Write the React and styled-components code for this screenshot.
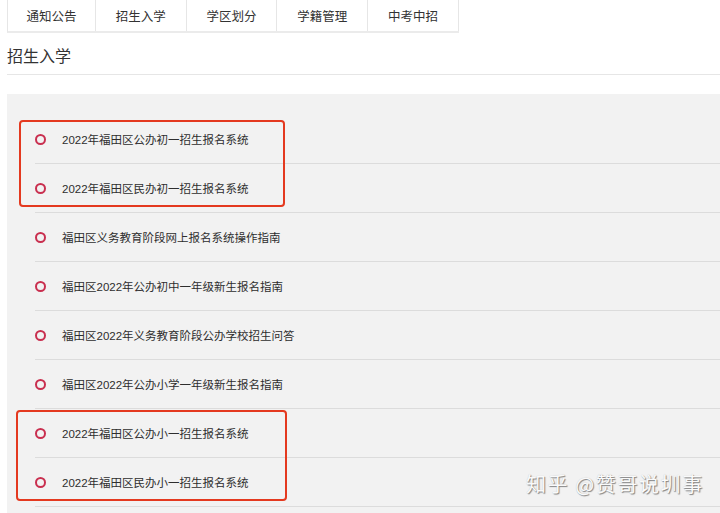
import React from "react";
import styled, { createGlobalStyle } from "styled-components";

const Global = createGlobalStyle`
  html, body { margin: 0; padding: 0; background: #fff; }
  body {
    font-family: "Liberation Sans", "Noto Sans CJK SC", sans-serif;
    color: #333;
    overflow: hidden;
  }
`;

const Page = styled.div`
  position: relative;
  width: 720px;
  height: 513px;
  padding-left: 7px;
  box-sizing: border-box;
  overflow: hidden;
`;

const Tabs = styled.nav`
  display: flex;
  height: 33px;
  width: 452px;
  border-bottom: 2px solid #ebebeb;
  border-left: 1px solid #e6e6e6;
  box-sizing: border-box;
`;

const Tab = styled.div`
  width: ${(p) => p.$w}px;
  display: flex;
  align-items: center;
  justify-content: center;
  font-size: 12.5px;
  color: #333;
  border-right: 1px solid #e6e6e6;
  box-sizing: border-box;
  padding-bottom: 1px;
`;

const Heading = styled.h2`
  margin: 0;
  height: 42px;
  display: flex;
  align-items: center;
  font-size: 16px;
  font-weight: normal;
  color: #333;
  border-bottom: 1px solid #e6e6e6;
  padding-top: 2px;
  box-sizing: border-box;
`;

const Panel = styled.div`
  margin-top: 19px;
  background: #f2f2f2;
  padding: 21px 0 0 28px;
  min-height: 420px;
`;

const Group = styled.div`
  position: relative;
  &::after {
    content: "";
    position: absolute;
    left: ${(p) => p.$l}px;
    top: ${(p) => p.$t}px;
    width: ${(p) => p.$w}px;
    height: ${(p) => p.$h}px;
    border: 2px solid #e4391f;
    border-radius: 4px;
    box-sizing: border-box;
    pointer-events: none;
  }
`;

const Row = styled.div`
  height: 49px;
  display: flex;
  align-items: center;
  border-bottom: 1px solid #dcdcdc;
  box-sizing: border-box;
  font-size: 11.5px;
  color: #2e2e2e;
`;

const Dot = styled.span`
  width: 11px;
  height: 11px;
  border: 2px solid #c92f4f;
  border-radius: 50%;
  box-sizing: border-box;
  margin-right: 16px;
  flex: none;
`;

const Watermark = styled.div`
  position: absolute;
  left: 526px;
  top: 469px;
  font-size: 20px;
  letter-spacing: 1.6px;
  font-family: "Noto Sans CJK SC", sans-serif;
  color: #fafafa;
  text-shadow: 1px 1px 1px rgba(0, 0, 0, 0.45), 0 0 1px rgba(0, 0, 0, 0.2);
  white-space: nowrap;
`;

const tabs = [
  ["通知公告", 88],
  ["招生入学", 91],
  ["学区划分", 91],
  ["学籍管理", 91],
  ["中考中招", 91],
];

const Item = ({ children }) => (
  <Row>
    <Dot />
    <span>{children}</span>
  </Row>
);

export default function App() {
  return (
    <Page>
      <Global />
      <Tabs>
        {tabs.map(([t, w]) => (
          <Tab key={t} $w={w}>
            {t}
          </Tab>
        ))}
      </Tabs>
      <Heading>招生入学</Heading>
      <Panel>
        <Group $l={-16} $t={5} $w={266} $h={87}>
          <Item>2022年福田区公办初一招生报名系统</Item>
          <Item>2022年福田区民办初一招生报名系统</Item>
        </Group>
        <Item>福田区义务教育阶段网上报名系统操作指南</Item>
        <Item>福田区2022年公办初中一年级新生报名指南</Item>
        <Item>福田区2022年义务教育阶段公办学校招生问答</Item>
        <Item>福田区2022年公办小学一年级新生报名指南</Item>
        <Group $l={-19} $t={1} $w={271} $h={91}>
          <Item>2022年福田区公办小一招生报名系统</Item>
          <Item>2022年福田区民办小一招生报名系统</Item>
        </Group>
      </Panel>
      <Watermark>知乎 @赞哥说圳事</Watermark>
    </Page>
  );
}
